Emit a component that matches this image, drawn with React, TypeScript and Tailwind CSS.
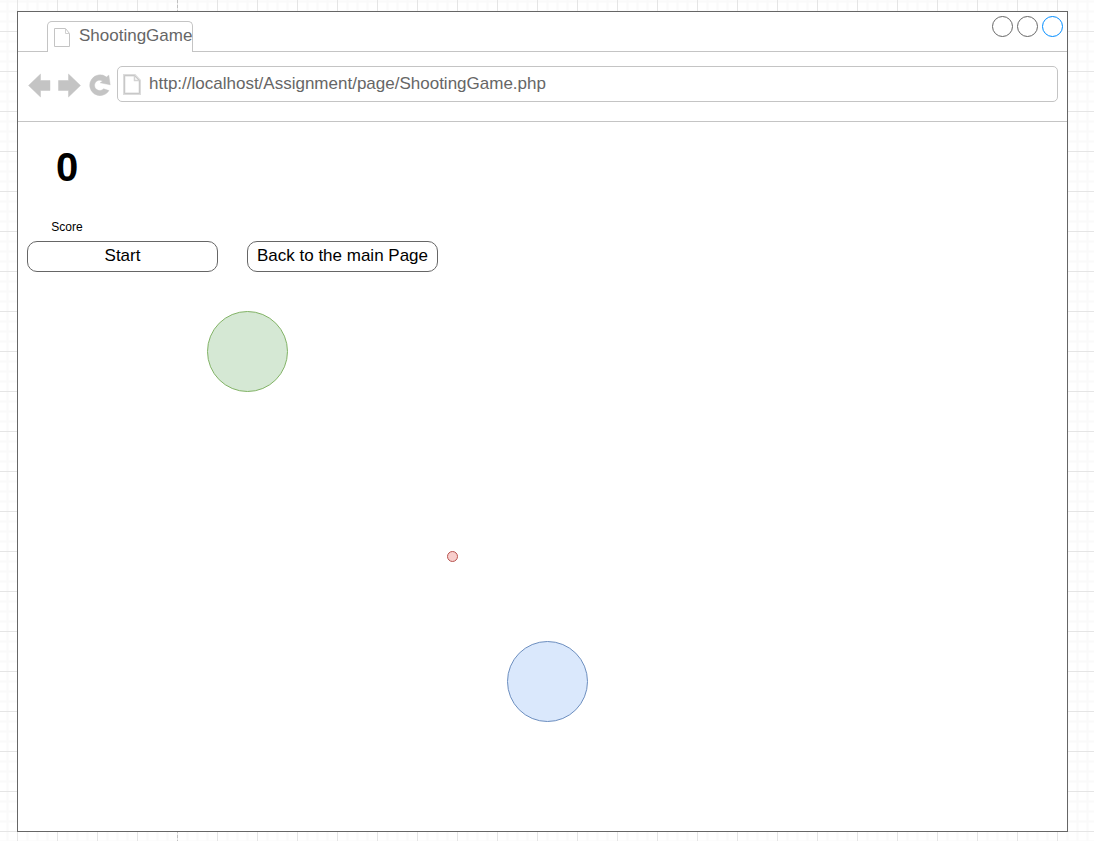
import React from "react";

const gridX = Array.from({ length: 110 }, (_, i) => 7.5 + i * 10);
const gridY = Array.from({ length: 85 }, (_, i) => 1.5 + i * 10);

function GridPaper() {
  return (
    <svg className="absolute inset-0" width="1094" height="841" fill="none">
      {gridX.map((x, i) => i % 4 !== 1 && <path key={x} d={`M${x} 0V842`} stroke="#fafafa" strokeWidth="2" />)}
      {gridY.map((y, i) => i % 4 !== 3 && <path key={y} d={`M0 ${y}H1094`} stroke="#fafafa" strokeWidth="2" />)}
      {gridX.map((x, i) => i % 4 === 1 && <path key={x} d={`M${x} 0V842`} stroke="#e5e5e5" />)}
      {gridY.map((y, i) => i % 4 === 3 && <path key={y} d={`M0 ${y}H1094`} stroke="#e5e5e5" />)}
      <path d="M177.5 0V842" stroke="#c0c0c0" strokeDasharray="3 2" />
    </svg>
  );
}

function PageIcon({ bold = false }: { bold?: boolean }) {
  return bold ? (
    <svg className="shrink-0" width="18" height="21" fill="none">
      <path d="M1.2 1.2H11.8L16.8 6.5V19.8H1.2Z" stroke="#dcdcdc" strokeWidth="2.4" />
      <path d="M11.5 1.5V6.5H16.5" stroke="#d4d4d4" strokeWidth="1.5" />
      <path d="M1.5 1.5H11.5L16.5 6.5V19.5H1.5Z" stroke="#c8c8c8" />
    </svg>
  ) : (
    <svg className="shrink-0" width="17" height="20" fill="none" stroke="#c4c4c4">
      <path d="M.5 .5H11.5L15.5 5.5V18.5H.5Z" />
      <path d="M11.5 .5V5.5H15.5" stroke="#d0d0d0" />
    </svg>
  );
}

function NavIcons() {
  return (
    <svg className="shrink-0" width="90" height="28" fill="#c4c4c4" stroke="#c4c4c4" strokeWidth="1" strokeOpacity=".45">
      <path d="M1.5 13.5L13.5 2V8.5H23V18.5H13.5V25Z" />
      <path d="M53.5 13.5L41.5 2V8.5H31.5V18.5H41.5V25Z" />
      <path d="M79.5 5L81.8 3.2L83.2 12.8L73.2 10.8L75.6 9A5.2 5.2 0 1 0 76.6 16.8L82 18.6A10.4 10.4 0 1 1 79.5 5Z" />
    </svg>
  );
}

function Dot({ className }: { className: string }) {
  return (
    <svg className={className} width="22" height="22" fill="none" stroke="currentColor">
      <circle cx="10.5" cy="10.5" r="10" />
    </svg>
  );
}

function Button({ children }: { children: React.ReactNode }) {
  return (
    <button className="flex h-[31px] w-[191px] items-center justify-center whitespace-nowrap rounded-[10px] border border-[#666] bg-white pb-[2px] text-[17px] leading-[20px] text-black">
      {children}
    </button>
  );
}

export default function App() {
  return (
    <div className="relative h-[842px] w-[1094px] overflow-hidden bg-white pl-[17px] pt-[11px] font-['Liberation_Sans',Arial,sans-serif]">
      <GridPaper />
      <main className="relative flex h-[821px] w-[1051px] flex-col border border-[#666] bg-white">
        <header className="flex h-[40px] shrink-0">
          <div className="w-[29px] border-b border-[#c4c4c4]" />
          <div className="mt-[9px] flex w-[146px] rounded-t-[5px] border border-b-0 border-[#c4c4c4] pl-[6px] pt-[6px]">
            <PageIcon />
            <span className="-mt-[2px] ml-[8px] whitespace-nowrap text-[17px] leading-[20px] text-[#666]">ShootingGame</span>
          </div>
          <div className="flex flex-1 justify-end gap-[3px] border-b border-[#c4c4c4] pr-[3px] pt-[4px]">
            <Dot className="text-[#666]" />
            <Dot className="text-[#666]" />
            <Dot className="text-[#008cff]" />
          </div>
        </header>
        <nav className="flex h-[70px] shrink-0 border-b border-[#c4c4c4] pl-[9px] pt-[14px]">
          <div className="w-[90px] pt-[6px]"><NavIcons /></div>
          <div className="flex h-[36px] w-[941px] rounded-[5px] border border-[#c4c4c4] pl-[5px] pt-[7px]">
            <PageIcon bold />
            <span className="ml-[8px] text-[17px] leading-[20px] text-[#666]">http://localhost/Assignment/page/ShootingGame.php</span>
          </div>
        </nav>
        <section className="relative flex-1 pl-[9px]">
          <div className="w-[80px] pt-[22px] text-center text-[40px] font-bold leading-[46px] text-black">0</div>
          <div className="mt-[30px] h-[21px] w-[80px] text-center text-[12px] leading-[15px] text-black">Score</div>
          <div className="flex gap-[29px]">
            <Button>Start</Button>
            <Button>Back to the main Page</Button>
          </div>
          <svg className="pointer-events-none absolute left-0 top-0" width="1049" height="709">
            <circle cx="229.5" cy="229.5" r="40" fill="#d5e8d4" stroke="#82b366" />
            <circle cx="434.5" cy="434.5" r="5" fill="#f8cecc" stroke="#b85450" />
            <circle cx="529.5" cy="559.5" r="40" fill="#dae8fc" stroke="#6c8ebf" />
          </svg>
        </section>
      </main>
    </div>
  );
}
